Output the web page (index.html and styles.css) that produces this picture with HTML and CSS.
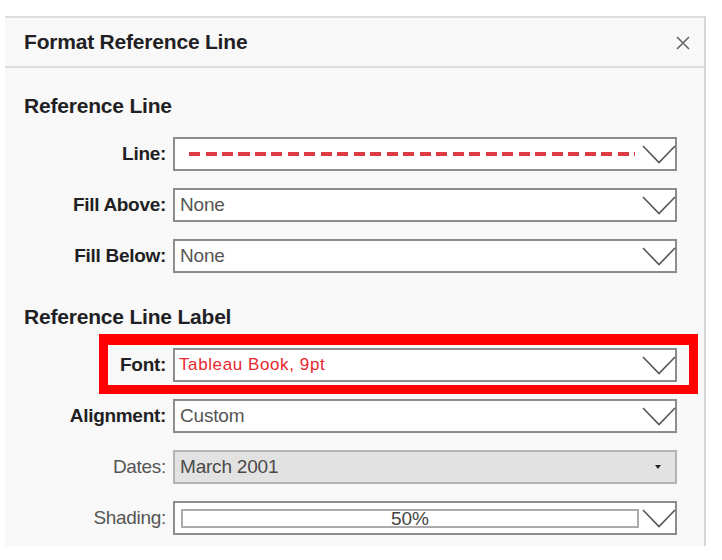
FILE: index.html
```html
<!DOCTYPE html>
<html>
<head>
<meta charset="utf-8">
<link rel="stylesheet" href="styles.css">
</head>
<body>
<div class="panel">
  <div class="titlebar">
    <span class="title">Format Reference Line</span>
    <svg class="close" width="14" height="14" viewBox="0 0 14 14"><path d="M1 1 L13 13 M13 1 L1 13" stroke="#666" stroke-width="1.6" fill="none"/></svg>
  </div>
  <div class="content">
    <h2 class="section first">Reference Line</h2>
    <div class="rows">
      <div class="row">
        <label class="lbl">Line:</label>
        <div class="dd">
          <span class="dash"></span>
          <svg class="chev" width="34" height="19" viewBox="0 0 34 19"><polyline points="1,1 17,17.5 33,1" stroke="#555" stroke-width="1.6" fill="none"/></svg>
        </div>
      </div>
      <div class="row">
        <label class="lbl">Fill Above:</label>
        <div class="dd"><span class="val">None</span>
          <svg class="chev" width="34" height="19" viewBox="0 0 34 19"><polyline points="1,1 17,17.5 33,1" stroke="#555" stroke-width="1.6" fill="none"/></svg>
        </div>
      </div>
      <div class="row">
        <label class="lbl">Fill Below:</label>
        <div class="dd"><span class="val">None</span>
          <svg class="chev" width="34" height="19" viewBox="0 0 34 19"><polyline points="1,1 17,17.5 33,1" stroke="#555" stroke-width="1.6" fill="none"/></svg>
        </div>
      </div>
    </div>
    <h2 class="section second">Reference Line Label</h2>
    <div class="rows">
      <div class="row highlight">
        <label class="lbl">Font:</label>
        <div class="dd"><span class="val red">Tableau Book, 9pt</span>
          <svg class="chev" width="34" height="19" viewBox="0 0 34 19"><polyline points="1,1 17,17.5 33,1" stroke="#555" stroke-width="1.6" fill="none"/></svg>
        </div>
      </div>
      <div class="row">
        <label class="lbl">Alignment:</label>
        <div class="dd"><span class="val">Custom</span>
          <svg class="chev" width="34" height="19" viewBox="0 0 34 19"><polyline points="1,1 17,17.5 33,1" stroke="#555" stroke-width="1.6" fill="none"/></svg>
        </div>
      </div>
      <div class="row">
        <label class="lbl light">Dates:</label>
        <div class="dd disabled"><span class="val">March 2001</span>
          <svg class="tri" width="6" height="4" viewBox="0 0 6 4"><polygon points="0,0 6,0 3,4" fill="#222"/></svg>
        </div>
      </div>
      <div class="row">
        <label class="lbl light">Shading:</label>
        <div class="dd shade">
          <div class="bar">50%</div>
          <svg class="chev" width="34" height="19" viewBox="0 0 34 19"><polyline points="1,1 17,17.5 33,1" stroke="#555" stroke-width="1.6" fill="none"/></svg>
        </div>
      </div>
    </div>
  </div>
</div>
</body>
</html>
```

FILE: styles.css
```css
*, *::before, *::after { box-sizing: border-box; }
html, body { margin: 0; padding: 0; background: #ffffff; }
body {
  font-family: "Liberation Sans", Arial, sans-serif;
  width: 722px;
  height: 560px;
  overflow: hidden;
}
.panel {
  margin: 16px 0 0 5px;
  width: 701px;
  height: 530px;
  background: #f8f8f8;
  border-top: 2px solid #dedede;
  border-right: 2px solid #d6d6d6;
}
.titlebar {
  height: 50px;
  border-bottom: 2px solid #dedede;
  display: flex;
  align-items: center;
  justify-content: space-between;
  padding: 0 14px 0 19px;
}
.title {
  font-size: 21px;
  font-weight: bold;
  color: #1f1f24;
  letter-spacing: -0.2px;
}
.close { display: block; margin-top: 1px; }
.section {
  margin: 0;
  font-size: 21px;
  line-height: 24px;
  font-weight: bold;
  color: #1f1f24;
  padding-left: 19px;
  letter-spacing: -0.2px;
}
.section.first { margin-top: 26px; }
.section.second { margin-top: 32px; }
.rows {
  margin-top: 19px;
  display: flex;
  flex-direction: column;
  gap: 17px;
}
.row {
  display: grid;
  grid-template-columns: 161px 504px;
  column-gap: 7px;
  align-items: center;
  position: relative;
}
.lbl {
  text-align: right;
  font-size: 19px;
  font-weight: bold;
  color: #1f1f24;
  letter-spacing: -0.3px;
}
.lbl.light { font-weight: normal; color: #555; }
.dd {
  height: 34px;
  border: 2px solid #8c8c8c;
  background: #fff;
  display: flex;
  align-items: center;
  justify-content: space-between;
  padding-left: 5px;
  position: relative;
}
.val {
  font-size: 19px;
  color: #555;
  letter-spacing: -0.2px;
}
.val.red {
  color: #e8262e;
  font-size: 17px;
  letter-spacing: 0.6px;
  margin-left: -1px;
}
.chev { display: block; margin-right: -1px; margin-top: 1px; }
.dash {
  display: block;
  width: 446px;
  height: 4px;
  margin-left: 9px;
  background: repeating-linear-gradient(to right, #de3a44 0, #de3a44 11px, transparent 11px, transparent 16.5px);
}
.dd.disabled {
  background: #e2e2e2;
  border-color: #b4b4b4;
  padding-right: 14px;
}
.dd.disabled .val { color: #4a4a4a; }
.tri { display: block; }
.dd.shade { padding-left: 6px; }
.bar {
  width: 458px;
  height: 19px;
  border: 2px solid #ababab;
  background: #fff;
  text-align: center;
  font-size: 19px;
  line-height: 15px;
  color: #444;
}
.highlight::after {
  content: "";
  position: absolute;
  left: 94px;
  top: -14px;
  width: 599px;
  height: 60px;
  border: 9px solid #ff0000;
  border-top-width: 11px;
  pointer-events: none;
}
```
